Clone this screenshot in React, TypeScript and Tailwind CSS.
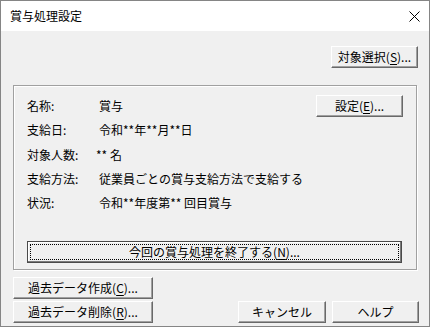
import React from "react";

const font = { fontFamily: '"Noto Sans CJK JP", "Noto Sans", sans-serif' };

function Btn({
  children,
  className = "",
}: {
  children: React.ReactNode;
  className?: string;
}) {
  return (
    <div
      className={`flex h-[22px] items-center justify-center border border-t-white border-l-white border-r-[#696969] border-b-[#696969] bg-[#f0f0f0] text-[12px] leading-none text-black shadow-[inset_-1px_-1px_0_#a0a0a0] ${className}`}
    >
      {children}
    </div>
  );
}

function Row({ label, value, h, shift = "" }: { label: string; value: string; h: string; shift?: string }) {
  return (
    <div className={`flex items-center ${h}`}>
      <span className="w-[72px]">{label}</span>
      <span className={shift}>{value}</span>
    </div>
  );
}

export default function App() {
  return (
    <div
      className="flex h-[327px] w-[430px] flex-col border border-[#858585] bg-[#f0f0f0] text-[12px] text-black"
      style={font}
    >
      {/* title bar */}
      <div className="flex h-[30px] shrink-0 items-center justify-between bg-white pl-[9px] pr-[9px]">
        <span className="text-[12px]">賞与処理設定</span>
        <svg width="11" height="11" viewBox="0 0 11 11" className="mr-[0px]">
          <path d="M0.5 0.5 L10.5 10.5 M10.5 0.5 L0.5 10.5" stroke="#000" strokeWidth="1" />
        </svg>
      </div>

      {/* top button */}
      <div className="flex justify-end pr-[11px] pt-[15px]">
        <Btn className="w-[87px]">
          対象選択(<span className="underline underline-offset-2">S</span>)...
        </Btn>
      </div>

      {/* group box */}
      <div className="ml-[12px] mt-[17px] flex h-[185px] w-[404px] flex-col border border-[#a0a0a0] pl-[13px] pr-[13px] pt-[9px] shadow-[inset_1px_1px_0_#fff,1px_1px_0_#fff]">
        <div className="flex h-[23px] items-start">
          <div className="flex h-[22px] items-center">
            <span className="w-[72px]">名称:</span>
            <span>賞与</span>
          </div>
          <Btn className="ml-auto w-[87px]">
            設定(<span className="underline underline-offset-2">E</span>)...
          </Btn>
        </div>
        <Row label="支給日:" value="令和**年**月**日" h="h-[24px]" />
        <Row label="対象人数:" value="** 名" h="h-[25px]" shift="-ml-[3px]" />
        <Row label="支給方法:" value="従業員ごとの賞与支給方法で支給する" h="h-[24px]" />
        <Row label="状況:" value="令和**年度第** 回目賞与" h="h-[24px]" />
        <div className="mt-auto mb-[6px] flex h-[22px] w-[375px] border border-[#4a4a4a] bg-[#f0f0f0] p-[2px] shadow-[inset_-1px_-1px_0_#7a7a7a,inset_1px_1px_0_#fff]">
          <div className="flex flex-1 items-center justify-center border border-dotted border-black leading-none">
            今回の賞与処理を終了する(<span className="underline underline-offset-2">N</span>)...
          </div>
        </div>
      </div>

      {/* bottom buttons */}
      <div className="mt-[7px] flex flex-col gap-[2px] pl-[12px] pr-[10px]">
        <Btn className="w-[140px]">
          過去データ作成(<span className="underline underline-offset-2">C</span>)...
        </Btn>
        <div className="flex">
          <Btn className="w-[140px]">
            過去データ削除(<span className="underline underline-offset-2">R</span>)...
          </Btn>
          <Btn className="ml-auto w-[88px]">キャンセル</Btn>
          <Btn className="ml-[6px] w-[87px]">ヘルプ</Btn>
        </div>
      </div>
    </div>
  );
}
